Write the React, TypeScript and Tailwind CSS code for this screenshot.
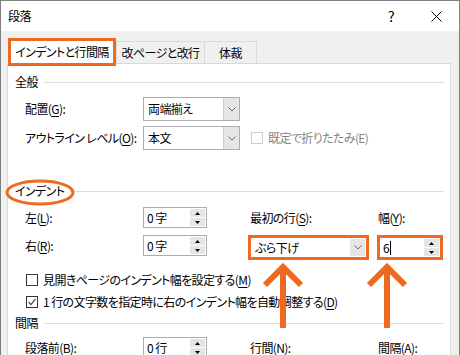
import React from 'react'

// paragraph dialog (indent tab) with tutorial highlights

const U = ({ children }: { children: React.ReactNode }) => (
  <span className='underline underline-offset-[2px]'>{children}</span>
)

const Chevron = () => (
  <svg width='8' height='5' viewBox='0 0 8 5'>
    <path d='M0.5 0.5 L4 4 L7.5 0.5' fill='none' stroke='#6b6b6b' strokeWidth='1' />
  </svg>
)

const Tri = ({ up }: { up?: boolean }) => (
  <svg width='5' height='3' viewBox='0 0 5 3'>
    <path d={up ? 'M0 3 L2.5 0 L5 3 Z' : 'M0 0 L2.5 3 L5 0 Z'} fill='#000' />
  </svg>
)

const SpinButtons = () => (
  <div className='ml-auto mr-[1px] flex w-[15px] flex-col gap-[1px]'>
    <div className='flex h-[8px] items-center justify-center bg-[#e5e5e5]'>
      <Tri up />
    </div>
    <div className='flex h-[8px] items-center justify-center bg-[#e5e5e5]'>
      <Tri />
    </div>
  </div>
)

const Spin = ({ value }: { value: string }) => (
  <div className='flex h-[21px] w-[64px] shrink-0 items-center border border-[#adadad] bg-white pl-[3px]'>
    <span>{value}</span>
    <SpinButtons />
  </div>
)

const Select = ({ value }: { value: string }) => (
  <div className='flex h-[24px] w-[97px] shrink-0 border border-[#adadad] bg-white'>
    <div className='flex flex-1 items-center pl-[4px]'>{value}</div>
    <div className='flex w-[16px] items-center justify-center border-l border-[#cccccc] bg-[#e5e5e5]'>
      <Chevron />
    </div>
  </div>
)

const Heading = ({ title }: { title: string }) => (
  <div className='flex h-[20px] items-center pl-[7px]'>
    <span>{title}</span>
    <div className='ml-[6px] mr-[6px] h-px flex-1 bg-[#dcdcdc]' />
  </div>
)

const CheckBox = ({ checked }: { checked?: boolean }) => (
  <div className='flex h-[12px] w-[12px] shrink-0 items-center justify-center border border-[#333333] bg-white'>
    {checked && (
      <svg width='10' height='10' viewBox='0 0 10 10'>
        <path d='M1.5 5 L4 7.5 L8.5 2' fill='none' stroke='#555' strokeWidth='1.2' />
      </svg>
    )}
  </div>
)

export default function App() {
  return (
    <div className="relative flex h-[355px] w-[460px] flex-col overflow-hidden whitespace-nowrap border-x border-t border-[#808080] bg-white font-['Noto_Sans_CJK_JP',sans-serif] text-[12px] leading-none tracking-[-0.6px] text-black [font-feature-settings:'palt']">
      {/* title bar */}
      <div className='flex h-[30px] shrink-0 items-center bg-white pl-[7px]'>
        <span>段落</span>
        <span className='ml-auto text-[14px]'>?</span>
        <svg className='ml-[37px] mr-[17px]' width='11' height='11' viewBox='0 0 11 11'>
          <path d='M0.5 0.5 L10.5 10.5 M10.5 0.5 L0.5 10.5' stroke='#000' strokeWidth='1' />
        </svg>
      </div>

      <div className='flex flex-1 flex-col bg-[#f0f0f0] pl-[6px] pr-[8px] pt-[10px]'>
        {/* tabs */}
        <div className='flex h-[22px] shrink-0'>
          <div className='relative z-10 -mt-[3px] ml-[1px] flex h-[28px] w-[108px] items-center justify-center border-[3px] border-[#ee6a21] bg-white'>
            インデントと行間隔
          </div>
          <div className='flex h-full w-[89px] items-center justify-center border-x border-t border-[#d9d9d9]'>
            改ページと改行
          </div>
          <div className='flex h-full w-[52px] items-center justify-center border-r border-t border-[#d9d9d9]'>
            体裁
          </div>
        </div>

        {/* panel */}
        <div className='flex-1 border border-[#d9d9d9] bg-white pt-[8px]'>
          <Heading title='全般' />

          <div className='mt-[5px] flex h-[24px] items-center pl-[17px]'>
            <div className='w-[118px]'>
              配置(<U>G</U>):
            </div>
            <Select value='両端揃え' />
          </div>

          <div className='mt-[5px] flex h-[24px] items-center pl-[17px]'>
            <div className='w-[118px]'>
              アウトライン レベル(<U>O</U>):
            </div>
            <Select value='本文' />
            <div className='ml-[11px] h-[12px] w-[12px] border border-[#cccccc] bg-white' />
            <span className='ml-[5px] text-[#838383]'>既定で折りたたみ(E)</span>
          </div>

          <div className='mt-[31px]'>
            <Heading title='インデント' />
          </div>

          <div className='mt-[6px] flex h-[21px] items-center pl-[17px]'>
            <div className='w-[118px]'>
              左(<U>L</U>):
            </div>
            <Spin value='0 字' />
            <div className='ml-[43px] w-[128px]'>
              最初の行(<U>S</U>):
            </div>
            <div>
              幅(<U>Y</U>):
            </div>
          </div>

          <div className='mt-[7px] flex h-[21px] items-start pl-[17px]'>
            <div className='flex h-[21px] w-[118px] items-center'>
              右(<U>R</U>):
            </div>
            <Spin value='0 字' />
            <div className='ml-[41px] flex h-[25px] w-[121px] shrink-0 border-[3px] border-[#ee6a21] bg-white'>
              <div className='flex flex-1 items-center pl-[4px]'>ぶら下げ</div>
              <div className='my-[1px] mr-[1px] flex w-[15px] items-center justify-center bg-[#e5e5e5]'>
                <Chevron />
              </div>
            </div>
            <div className='ml-[8px] flex h-[25px] w-[66px] shrink-0 items-center border-[3px] border-[#ee6a21] bg-white pl-[3px]'>
              <span>6</span>
              <div className='ml-[1px] h-[14px] w-px bg-black' />
              <SpinButtons />
            </div>
          </div>

          <div className='mt-[14px] flex h-[20px] items-center pl-[18px]'>
            <CheckBox />
            <span className='ml-[5px]'>
              見開きページのインデント幅を設定する(<U>M</U>)
            </span>
          </div>

          <div className='mt-[2px] flex h-[20px] items-center pl-[18px]'>
            <CheckBox checked />
            <span className='ml-[5px]'>
              1 行の文字数を指定時に右のインデント幅を自動調整する(<U>D</U>)
            </span>
          </div>

          <div className='mt-[1px]'>
            <Heading title='間隔' />
          </div>

          <div className='mt-[4px] flex h-[21px] items-center pl-[17px]'>
            <div className='w-[118px]'>
              段落前(<U>B</U>):
            </div>
            <Spin value='0 行' />
            <div className='ml-[43px] w-[128px]'>
              行間(<U>N</U>):
            </div>
            <div>
              間隔(<U>A</U>):
            </div>
          </div>
        </div>
      </div>

      {/* tutorial marks */}
      <svg className='pointer-events-none absolute left-0 top-0' width='460' height='355' viewBox='0 0 460 355'>
        <ellipse cx='39' cy='191.5' rx='33' ry='11.5' fill='none' stroke='#ee6a21' strokeWidth='3' />
        <g fill='none' stroke='#ee6a21' strokeWidth='6'>
          <path d='M282 266 L282 327' />
          <path d='M264 284 L282 266 L300 284' />
          <path d='M386 266 L386 327' />
          <path d='M368 284 L386 266 L404 284' />
        </g>
      </svg>
    </div>
  )
}
